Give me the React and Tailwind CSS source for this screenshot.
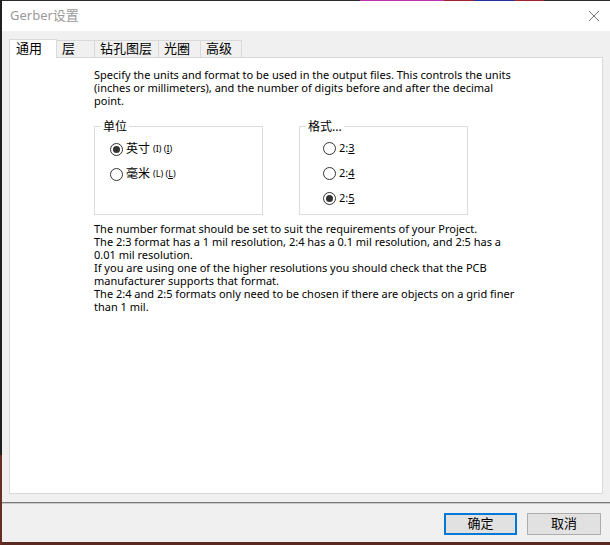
import React from "react";

const FONT = "font-['Noto_Sans','Noto_Sans_CJK_SC',sans-serif]";

const Radio = ({ checked }) => (
  <span className="w-[13px] h-[13px] rounded-full border border-[#333] bg-white flex items-center justify-center shrink-0">
    {checked && <span className="w-[7px] h-[7px] rounded-full bg-[#333]" />}
  </span>
);

const GroupBox = ({ title, children }) => (
  <div className="relative w-[169px] h-[89px] border border-[#dcdcdc]">
    <span className="absolute -top-[8px] left-[6px] bg-white px-[2px] text-[12px] leading-[16px] text-black">
      {title}
    </span>
    {children}
  </div>
);

const Tab = ({ label, active, w }) => (
  <div
    className={
      active
        ? "h-[19px] -mb-px bg-white border border-b-0 border-[#d9d9d9] pl-[6px] flex items-center whitespace-nowrap text-[13px] text-black z-10"
        : "h-[17px] mt-[2px] bg-[#f0f0f0] border border-b-0 border-l-0 border-[#d9d9d9] pl-[5px] flex items-center whitespace-nowrap text-[13px] text-black"
    }
    style={{ width: w }}
  >
    {label}
  </div>
);

export default function App() {
  return (
    <div className={`w-[610px] h-[545px] flex bg-[#5b2a22] overflow-hidden ${FONT}`}>
      <div className="w-[2px] flex flex-col">
        <div className="h-[455px] bg-[#1f1f1f]" />
        <div className="flex-1 bg-[#6b2d22]" />
      </div>
      <div className="flex-1 flex flex-col h-[542px] bg-[#f0f0f0]">
        <div className="h-px bg-[#2b2b2b] flex">
          <div className="w-[358px]" />
          <div className="w-[84px] bg-[#c030b0]" />
          <div className="w-[30px] bg-[#a02030]" />
          <div className="w-[40px] bg-[#2030a0]" />
          <div className="w-[30px] bg-[#a02030]" />
        </div>
        <div className="h-[30px] bg-white flex items-center justify-between pl-[8px] pr-[10px]">
          <span className="text-[13px] text-[#9a9a9a]">Gerber设置</span>
          <svg width="12" height="12" viewBox="0 0 12 12">
            <path d="M1 1L11 11M11 1L1 11" stroke="#777" strokeWidth="1" />
          </svg>
        </div>
        <div className="pt-[7px] pl-[7px] pr-[7px] flex flex-col">
          <div className="flex items-end h-[19px]">
            <Tab label="通用" active w={48} />
            <Tab label="层" w={38} />
            <Tab label="钻孔图层" w={64} />
            <Tab label="光圈" w={42} />
            <Tab label="高级" w={41} />
          </div>
          <div className="h-[437px] bg-white border border-[#d9d9d9] pl-[84px] pt-[10px] text-[11px] leading-[13px] text-black">
            <p className="w-[425px]">
              Specify the units and format to be used in the output files. This controls the units
              (inches or millimeters), and the number of digits before and after the decimal
              point.
            </p>
            <div className="flex gap-[36px] mt-[19px]">
              <GroupBox title="单位">
                <div className="flex flex-col gap-[11px] pl-[15px] pt-[15px]">
                  <div className="flex items-center gap-[3px]">
                    <Radio checked />
                    <span className="text-[12px] leading-[14px]">英寸</span>
                    <span className="text-[9px] leading-[14px]">(I) (<span className="underline">I</span>)</span>
                  </div>
                  <div className="flex items-center gap-[3px]">
                    <Radio />
                    <span className="text-[12px] leading-[14px]">毫米</span>
                    <span className="text-[9px] leading-[14px]">(L) (<span className="underline">L</span>)</span>
                  </div>
                </div>
              </GroupBox>
              <GroupBox title="格式...">
                <div className="flex flex-col gap-[11px] pl-[23px] pt-[14px]">
                  {["3", "4", "5"].map((d) => (
                    <div key={d} className="flex items-center gap-[3px] text-[11px] leading-[14px]">
                      <Radio checked={d === "5"} />
                      <span>
                        2:<span className="underline">{d}</span>
                      </span>
                    </div>
                  ))}
                </div>
              </GroupBox>
            </div>
            <div className="w-[425px] mt-[7px]">
              <p>The number format should be set to suit the requirements of your Project.</p>
              <p>The 2:3 format has a 1 mil resolution, 2:4 has a 0.1 mil resolution, and 2:5 has a 0.01 mil resolution.</p>
              <p>If you are using one of the higher resolutions you should check that the PCB manufacturer supports that format.</p>
              <p>The 2:4 and 2:5 formats only need to be chosen if there are objects on a grid finer than 1 mil.</p>
            </div>
          </div>
        </div>
        <div className="mt-[8px] h-px bg-[#7a7a7a]" />
        <div className="h-px bg-[#c8c8c8]" />
        <div className="flex justify-end gap-[10px] pr-[9px] pt-[9px]">
          <button className="w-[73px] h-[22px] bg-[#e1e1e1] border-2 border-[#0078d7] text-[13px] text-black flex items-center justify-center">
            确定
          </button>
          <button className="w-[74px] h-[22px] bg-[#e1e1e1] border border-[#adadad] text-[13px] text-black flex items-center justify-center">
            取消
          </button>
        </div>
      </div>
    </div>
  );
}
